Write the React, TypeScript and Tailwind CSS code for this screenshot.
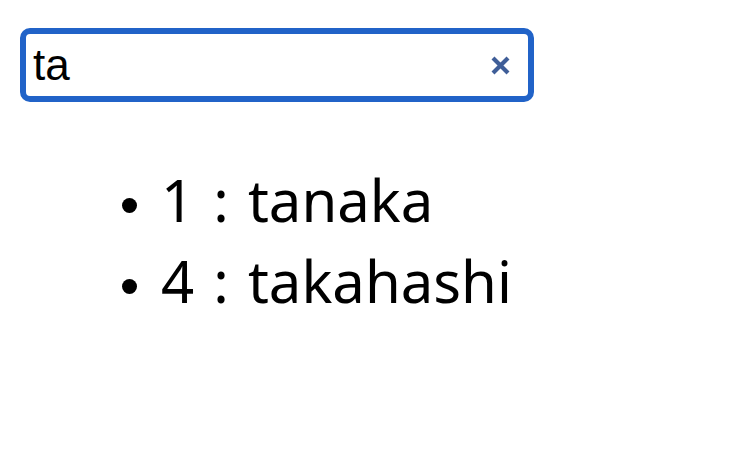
import React from "react";

export default function App() {
  const items = [
    { id: 1, name: "tanaka" },
    { id: 4, name: "takahashi" },
  ];
  return (
    <div className="min-h-[472px] w-[744px] bg-white pl-[20px] pt-[28px]">
      <div className="flex h-[74px] w-[514px] items-center rounded-[10px] border-[6px] border-[#2163c8] bg-white pl-[7px] pr-[18px]">
        <span
          className="flex-1 text-[44px] leading-none text-black"
          style={{ fontFamily: '"Liberation Sans", Arial, sans-serif' }}
        >
          ta
        </span>
        <svg width="19" height="19" viewBox="0 0 19 19" className="shrink-0">
          <path d="M2 2 L17 17 M17 2 L2 17" stroke="#3f5e98" strokeWidth="4.2" strokeLinecap="butt" />
        </svg>
      </div>
      <ul
        className="mt-[57px] pl-[102px] text-[58px] leading-[81px] text-black [word-spacing:4px]"
        style={{ fontFamily: '"Noto Sans", sans-serif' }}
      >
        {items.map((it) => (
          <li key={it.id} className="flex items-start">
            <span className="mr-[24px] mt-[39px] h-[15px] w-[15px] shrink-0 rounded-full bg-black" />
            <span>
              {it.id} : {it.name}
            </span>
          </li>
        ))}
      </ul>
    </div>
  );
}
